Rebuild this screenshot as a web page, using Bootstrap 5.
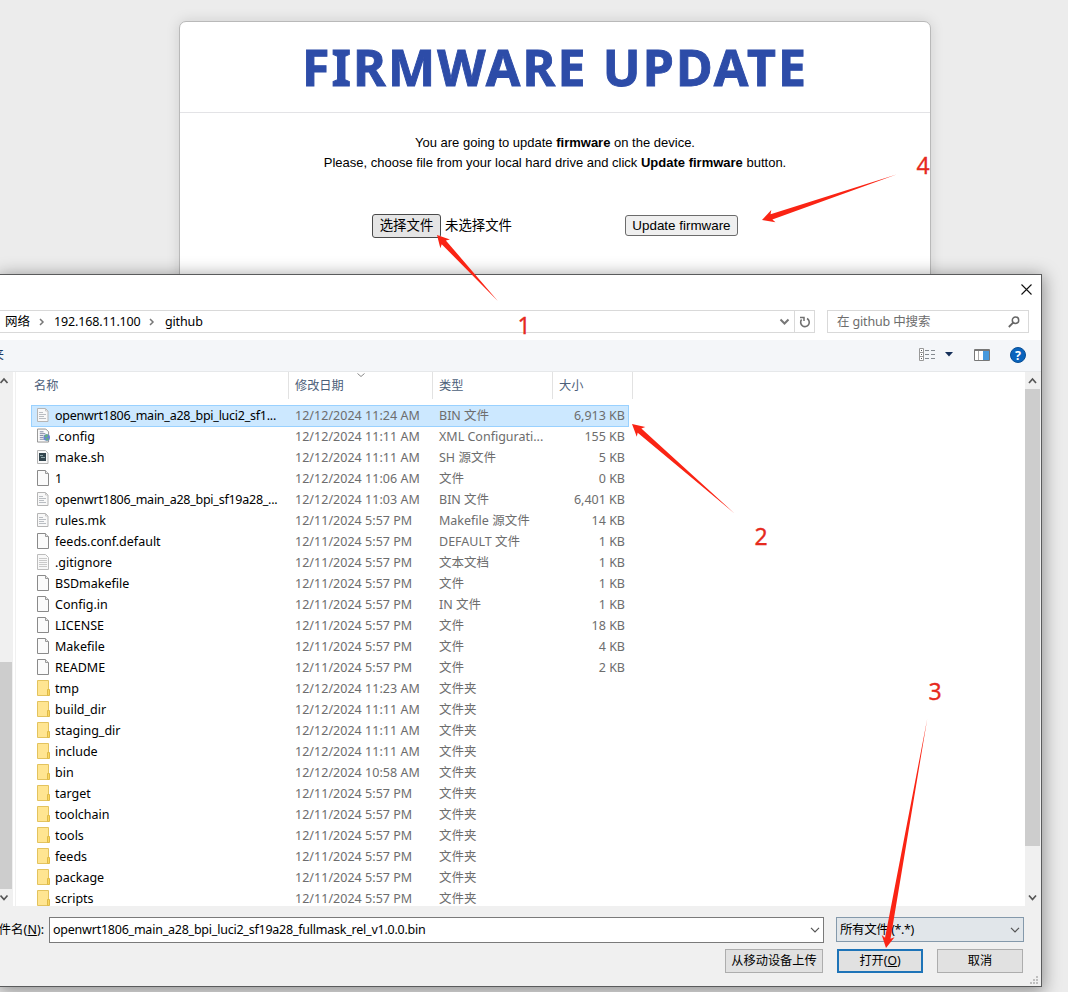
<!DOCTYPE html>
<html lang="zh-CN">
<head>
<meta charset="utf-8">
<meta name="viewport" content="width=device-width, initial-scale=1">
<title>Firmware update</title>
<link href="https://cdn.jsdelivr.net/npm/bootstrap@5.3.0/dist/css/bootstrap.min.css" rel="stylesheet">
<style>
body{background:#ececec;height:992px;overflow:hidden;font-family:"Noto Sans","Noto Sans CJK SC",sans-serif;font-size:12.5px;line-height:20px;color:#000}
.fw-panel{width:752px;height:300px;margin:21px 0 0 179px;border:1px solid #b9b9b9;border-radius:7px;box-shadow:0 0 14px rgba(0,0,0,.13)}
.fw-head{height:91px;border-bottom:1px solid #e3e3e6;color:#2d4ca8}
.fw-head h1{font:bold 50px/91px "Noto Sans",sans-serif;letter-spacing:2.15px;-webkit-text-stroke:.9px #2d4ca8;margin:0;white-space:nowrap}
.fw-body{font-family:"Liberation Sans","Noto Sans CJK SC",sans-serif;font-size:13px;line-height:20px;padding-top:20px}
.fw-form{padding:41px 0 0 192px;height:64px;font-size:13.4px}
.sysbtn{border:1px solid #6b6b6b;border-radius:3px;background:#efefef;color:#000;padding:0;text-align:center}
.pick{width:69px;height:24px;background:#e5e5e5;border-color:#4a4a4a;line-height:22px}
.send{width:113px;height:21px;line-height:19px;margin-left:113px;font-size:13.4px}
.dialog-win{left:0;top:274px;width:1042px;height:713px;border:1px solid #5a5b5c;border-left:0;background:#fff;box-shadow:0 3px 16px 2px rgba(0,0,0,.38)}
.titlebar{height:35px;padding-right:9px}
.addr{height:23px;margin-bottom:7px}
.addrbox{width:815px;border:1px solid #d9d9d9;border-left:0;padding-left:5px;line-height:20px}
.addr-ip{letter-spacing:-.15px}
.refresh{width:20px;height:21px;border-left:1px solid #d9d9d9}
.searchbox{width:202px;margin-left:12px;border:1px solid #d9d9d9;color:#6d6d6d;padding:0 8px 0 9px}
.searchbox span{letter-spacing:-.15px}
.tools{height:32px;background:#f4f6f9;border-bottom:1px solid #e6e8ea;padding:0 15px 2px 0}
.cut{width:4px;color:#1c3c66;direction:rtl}
.mainpane{height:534px}
.sb{width:16px;background:#f0f0f0;padding-right:1px}
.sb-l{width:13px}
.thumb{background:#cdcdcd}
.files{border-left:1px solid #f0f0f0;margin-left:2px}
.cols{height:27px;color:#4c607a;padding-left:17px;margin-bottom:6px;line-height:27px;font-size:12.2px}
.cols div{border-right:1px solid #e2e2e2;padding-left:6px}
.c1{width:256px}.c2{width:144px}.c3{width:120px}.c4{width:80px}
.cols .c1{padding-left:1px}
.rowf{height:21px;width:598px;margin-left:15px;padding-left:6px;color:#6d6d6d;line-height:21px;white-space:nowrap}
.rowf.sel{background:#cce8ff;box-shadow:inset 0 0 0 1px #99d1ff;height:22px;margin-bottom:-1px}
.rowf svg{width:13px;height:16px;margin:2px 5px 0 0;flex:none}
.rowf .n{width:240px;color:#000}
.rowf .long{letter-spacing:-.25px}
.rowf .d{width:144px;letter-spacing:.03px}.rowf .t{width:106px}.rowf .s{width:80px;text-align:right}
.foot{height:80px;background:#f0f0f0;padding-top:11px}
.lab{width:49px;direction:rtl;white-space:nowrap;overflow:hidden;padding-right:5px;line-height:26px}
.fname{width:775px;height:26px;border:1px solid #7a7a7a;padding:0 3px}
.fn{letter-spacing:-.23px}
.ftype{width:188px;height:25px;border:1px solid #8499ab;background:#e1e6ea;margin-left:12px;padding:0 3px}
.ftype span{letter-spacing:-.4px}
.wbtn{height:24px;border:1px solid #adadad;background:#e1e1e1;border-radius:0;padding:0;line-height:20px;color:#000;font-size:12.2px}
.wbtn.main-b{border:2px solid #1e74b8;line-height:18px}
.grip{right:3px;bottom:2px}
.marks{left:0;top:0;z-index:5}
.marks text{font:23px "Noto Sans",sans-serif;fill:#e62a1e;stroke:#e62a1e;stroke-width:.3px}
</style>
</head>
<body>
<svg class="d-none">
 <symbol id="pg" viewBox="0 0 13 16"><path d="M.5.5h8l3 3v12H.5z" fill="#fbfbfb" stroke="#8a8a8a"/><path d="M8.500.5v3h3" fill="#e8e8e8" stroke="#9a9a9a"/></symbol>
 <symbol id="tx" viewBox="0 0 13 16"><path d="M.5 1.500h8l2.500 2.500v10.500H.5z" fill="#f8f8f8" stroke="#b5b5b5"/><path d="M8.500 1.500v2.500H11" fill="none" stroke="#c5c5c5"/><path d="M2 5.500h4M2 7.500h7M2 9.500h5M2 11.500h7" stroke="#b9bdc2"/></symbol>
 <symbol id="tl" viewBox="0 0 13 16"><path d="M.5.5h8l3 3v12H.5z" fill="#f8f8f8" stroke="#bcbcbc"/><path d="M2 4.500h8M2 6.500h8M2 8.500h8M2 10.500h8M2 12.500h8" stroke="#c9c9c9"/></symbol>
 <symbol id="sh" viewBox="0 0 13 16"><path d="M.5 1.500h8l2.500 2.500v10.500H.5z" fill="#f8f8f8" stroke="#b5b5b5"/><path d="M2 4h7v8H2z" fill="#34464f"/><path d="M3 6.500h3M4 8.500h4" stroke="#8fa7ab"/></symbol>
 <symbol id="cf" viewBox="0 0 14 16"><path d="M.5.5h9l3 3v11H.5z" fill="#fafafa" stroke="#8d8d8d"/><path d="M3 3.500h4M3 5.500h6M3 7.500h4M3 9.500h4M3 11.500h5" stroke="#7b83a0"/><circle cx="10.500" cy="9.500" r="3.500" fill="#6b83d2"/><path d="M8 8q2-3 4-1l-1 2-2 1zM9 12l2-2 2 1-2 2z" fill="#62b27b"/></symbol>
 <symbol id="fd" viewBox="0 0 13 16"><path d="M.5.5h11v15H.5z" fill="#ffe591" stroke="#e3c35e"/><path d="M10.500 9.500h2v6h-2z" fill="#fbd75f" stroke="#dfba48"/></symbol>
 <symbol id="dn" viewBox="0 0 10 6"><path d="M1 .8l4 4 4-4" fill="none" stroke="currentColor" stroke-width="1.200"/></symbol>
</svg>

<section class="fw-panel bg-white">
 <div class="fw-head text-center"><h1>FIRMWARE UPDATE</h1></div>
 <div class="fw-body text-center">
  <div>You are going to update <b>firmware</b> on the device.</div>
  <div>Please, choose file from your local hard drive and click <b>Update firmware</b> button.</div>
  <div class="fw-form d-flex align-items-center">
   <button class="sysbtn pick">选择文件</button><span class="ms-1">未选择文件</span>
   <button class="sysbtn send">Update firmware</button>
  </div>
 </div>
</section>

<div class="dialog-win position-absolute d-flex flex-column">
 <div class="titlebar d-flex justify-content-end align-items-start">
  <svg width="11" height="11" style="margin-top:9px"><path d="M.5.5l10 10M10.500.5l-10 10" stroke="#111" stroke-width="1.100"/></svg>
 </div>
 <div class="addr d-flex">
  <div class="addrbox d-flex align-items-center">
   <span style="width:34px">网络</span>
   <svg width="6" height="8" style="margin-right:9px"><path d="M1 1l3 3-3 3" fill="none" stroke="#777" stroke-width="1.500"/></svg>
   <span style="width:95px" class="addr-ip">192.168.11.100</span>
   <svg width="6" height="8" style="margin-right:10px"><path d="M1 1l3 3-3 3" fill="none" stroke="#777" stroke-width="1.500"/></svg>
   <span class="addr-ip">github</span>
   <svg class="ms-auto me-1" width="11" height="8"><path d="M1.500 1.500l4 4 4-4" fill="none" stroke="#777" stroke-width="2"/></svg>
   <div class="refresh d-flex align-items-center justify-content-center"><svg width="12" height="12" viewBox="0 0 12 12"><path d="M2.600 3.600A4.300 4.300 0 1 0 8 2.500" fill="none" stroke="#707070" stroke-width="1.600"/><path d="M1 1.500h4V5" fill="none" stroke="#707070" stroke-width="1.500"/></svg></div>
  </div>
  <div class="searchbox d-flex align-items-center justify-content-between"><span>在 github 中搜索</span>
   <svg width="12" height="12"><circle cx="7.500" cy="4.200" r="3.200" fill="none" stroke="#666" stroke-width="1.500"/><path d="M5.200 6.600L.8 11" stroke="#666" stroke-width="1.800"/></svg>
  </div>
 </div>
 <div class="tools d-flex align-items-center">
  <div class="cut overflow-hidden text-nowrap">夹</div>
  <svg class="ms-auto" width="17" height="13"><path d="M.5.5h4v12h-4zM.5 4.500h4M.5 8.500h4" fill="#fff" stroke="#999"/><path d="M2 2.500h1M2 6.500h1M2 10.500h1" stroke="#555"/><path d="M6 2.500h4M12 2.500h4M6 6.500h4M12 6.500h4M6 10.500h4M12 10.500h4" stroke="#848a90"/></svg>
  <svg width="8" height="5" style="margin:0 21px 0 9px"><path d="M0 0h8L4 4.500z" fill="#16305a"/></svg>
  <svg width="16" height="12"><path d="M.5.5h15v11H.5z" fill="#fff" stroke="#777"/><path d="M1 1.500h14" stroke="#777"/><path d="M4.500 2v9" stroke="#aaa"/><path d="M9 2h6v9H9z" fill="#4699dd"/></svg>
  <svg width="16" height="16" style="margin-left:20px"><circle cx="8" cy="8" r="7.500" fill="#0a64bd" stroke="#084e95"/><text x="8" y="12.500" text-anchor="middle" font-family="Noto Sans,sans-serif" font-size="12.500" font-weight="bold" fill="#fff">?</text></svg>
 </div>
 <div class="mainpane d-flex">
  <div class="sb sb-l d-flex flex-column align-items-start">
   <svg width="9" height="8" style="margin:5px 0 0"><path d="M.5 6l3.500-4 3.500 4" fill="none" stroke="#555" stroke-width="1.700"/></svg>
   <div class="thumb mt-auto" style="width:12px;height:227px"></div>
   <svg width="9" height="8" style="margin:5px 0 4px"><path d="M.5 1.500l3.500 4 3.500-4" fill="none" stroke="#555" stroke-width="1.700"/></svg>
  </div>
  <div class="files flex-fill overflow-hidden">
   <div class="cols d-flex"><div class="c1">名称</div><div class="c2 position-relative">修改日期<svg class="position-absolute" style="left:68px;top:1px" width="8" height="5"><path d="M.5.5l3.500 3 3.500-3" fill="none" stroke="#888"/></svg></div><div class="c3">类型</div><div class="c4">大小</div></div>
   <div class="rowf sel d-flex"><svg><use href="#tx"/></svg><span class="n long">openwrt1806_main_a28_bpi_luci2_sf1...</span><span class="d">12/12/2024 11:24 AM</span><span class="t">BIN 文件</span><span class="s">6,913 KB</span></div>
   <div class="rowf d-flex"><svg><use href="#cf"/></svg><span class="n">.config</span><span class="d">12/12/2024 11:11 AM</span><span class="t">XML Configurati...</span><span class="s">155 KB</span></div>
   <div class="rowf d-flex"><svg><use href="#sh"/></svg><span class="n">make.sh</span><span class="d">12/12/2024 11:11 AM</span><span class="t">SH 源文件</span><span class="s">5 KB</span></div>
   <div class="rowf d-flex"><svg><use href="#pg"/></svg><span class="n">1</span><span class="d">12/12/2024 11:06 AM</span><span class="t">文件</span><span class="s">0 KB</span></div>
   <div class="rowf d-flex"><svg><use href="#tx"/></svg><span class="n long">openwrt1806_main_a28_bpi_sf19a28_...</span><span class="d">12/12/2024 11:03 AM</span><span class="t">BIN 文件</span><span class="s">6,401 KB</span></div>
   <div class="rowf d-flex"><svg><use href="#tx"/></svg><span class="n">rules.mk</span><span class="d">12/11/2024 5:57 PM</span><span class="t">Makefile 源文件</span><span class="s">14 KB</span></div>
   <div class="rowf d-flex"><svg><use href="#pg"/></svg><span class="n">feeds.conf.default</span><span class="d">12/11/2024 5:57 PM</span><span class="t">DEFAULT 文件</span><span class="s">1 KB</span></div>
   <div class="rowf d-flex"><svg><use href="#tl"/></svg><span class="n">.gitignore</span><span class="d">12/11/2024 5:57 PM</span><span class="t">文本文档</span><span class="s">1 KB</span></div>
   <div class="rowf d-flex"><svg><use href="#pg"/></svg><span class="n">BSDmakefile</span><span class="d">12/11/2024 5:57 PM</span><span class="t">文件</span><span class="s">1 KB</span></div>
   <div class="rowf d-flex"><svg><use href="#pg"/></svg><span class="n">Config.in</span><span class="d">12/11/2024 5:57 PM</span><span class="t">IN 文件</span><span class="s">1 KB</span></div>
   <div class="rowf d-flex"><svg><use href="#pg"/></svg><span class="n">LICENSE</span><span class="d">12/11/2024 5:57 PM</span><span class="t">文件</span><span class="s">18 KB</span></div>
   <div class="rowf d-flex"><svg><use href="#pg"/></svg><span class="n">Makefile</span><span class="d">12/11/2024 5:57 PM</span><span class="t">文件</span><span class="s">4 KB</span></div>
   <div class="rowf d-flex"><svg><use href="#pg"/></svg><span class="n">README</span><span class="d">12/11/2024 5:57 PM</span><span class="t">文件</span><span class="s">2 KB</span></div>
   <div class="rowf d-flex"><svg><use href="#fd"/></svg><span class="n">tmp</span><span class="d">12/12/2024 11:23 AM</span><span class="t">文件夹</span></div>
   <div class="rowf d-flex"><svg><use href="#fd"/></svg><span class="n">build_dir</span><span class="d">12/12/2024 11:11 AM</span><span class="t">文件夹</span></div>
   <div class="rowf d-flex"><svg><use href="#fd"/></svg><span class="n">staging_dir</span><span class="d">12/12/2024 11:11 AM</span><span class="t">文件夹</span></div>
   <div class="rowf d-flex"><svg><use href="#fd"/></svg><span class="n">include</span><span class="d">12/12/2024 11:11 AM</span><span class="t">文件夹</span></div>
   <div class="rowf d-flex"><svg><use href="#fd"/></svg><span class="n">bin</span><span class="d">12/12/2024 10:58 AM</span><span class="t">文件夹</span></div>
   <div class="rowf d-flex"><svg><use href="#fd"/></svg><span class="n">target</span><span class="d">12/11/2024 5:57 PM</span><span class="t">文件夹</span></div>
   <div class="rowf d-flex"><svg><use href="#fd"/></svg><span class="n">toolchain</span><span class="d">12/11/2024 5:57 PM</span><span class="t">文件夹</span></div>
   <div class="rowf d-flex"><svg><use href="#fd"/></svg><span class="n">tools</span><span class="d">12/11/2024 5:57 PM</span><span class="t">文件夹</span></div>
   <div class="rowf d-flex"><svg><use href="#fd"/></svg><span class="n">feeds</span><span class="d">12/11/2024 5:57 PM</span><span class="t">文件夹</span></div>
   <div class="rowf d-flex"><svg><use href="#fd"/></svg><span class="n">package</span><span class="d">12/11/2024 5:57 PM</span><span class="t">文件夹</span></div>
   <div class="rowf d-flex"><svg><use href="#fd"/></svg><span class="n">scripts</span><span class="d">12/11/2024 5:57 PM</span><span class="t">文件夹</span></div>
  </div>
  <div class="sb d-flex flex-column align-items-center">
   <svg width="9" height="8" style="margin:5px 0 4px"><path d="M1 6l3.500-4L8 6" fill="none" stroke="#555" stroke-width="1.700"/></svg>
   <div class="thumb w-100" style="height:457px"></div>
   <svg class="mt-auto" width="9" height="8" style="margin-bottom:4px"><path d="M1 1.500l3.500 4 3.500-4" fill="none" stroke="#555" stroke-width="1.700"/></svg>
  </div>
 </div>
 <div class="foot position-relative">
  <div class="d-flex">
   <div class="lab"><bdi dir="ltr">件名(<u>N</u>):</bdi></div>
   <div class="fname bg-white d-flex align-items-center justify-content-between"><span class="fn">openwrt1806_main_a28_bpi_luci2_sf19a28_fullmask_rel_v1.0.0.bin</span><svg width="10" height="6" color="#555"><use href="#dn"/></svg></div>
   <div class="ftype d-flex align-items-center justify-content-between"><span>所有文件 (*.*)</span><svg width="10" height="6" color="#555"><use href="#dn"/></svg></div>
  </div>
  <div class="d-flex justify-content-end" style="margin-top:6px;padding-right:18px">
   <button class="wbtn" style="width:98px">从移动设备上传</button>
   <button class="wbtn main-b" style="width:86px;margin:0 14px">打开(<u>O</u>)</button>
   <button class="wbtn" style="width:86px">取消</button>
  </div>
  <svg class="grip position-absolute" width="8" height="8"><path d="M6 0h2v2H6zM3 3h2v2H3zM6 3h2v2H6zM0 6h2v2H0zM3 6h2v2H3zM6 6h2v2H6z" fill="#bfbfbf"/></svg>
 </div>
</div>

<!-- step arrows and numbers over the windows -->
<svg class="marks position-absolute" width="1068" height="992" fill="#fa2414">
 <path transform="translate(437 235) rotate(47.3)" d="M0 0L12-6.500 10-2.800 90 0 10 2.800 12 6.500z"/>
 <path transform="translate(632 424) rotate(41.1)" d="M0 0L12-6.500 10-2.800 136 0 10 2.800 12 6.500z"/>
 <path transform="translate(886 948) rotate(-79.800)" d="M0 0L12-6.500 10-2.800 233 0 10 2.800 12 6.500z"/>
 <path transform="translate(762 220) rotate(-18.700)" d="M0 0L12-6.500 10-2.800 142 0 10 2.800 12 6.500z"/>
 <text x="517.500" y="334">1</text><text x="754.500" y="545">2</text><text x="928.500" y="700">3</text><text x="916.500" y="174">4</text>
</svg>
<script src="https://cdn.jsdelivr.net/npm/bootstrap@5.3.0/dist/js/bootstrap.bundle.min.js"></script>
</body>
</html>
